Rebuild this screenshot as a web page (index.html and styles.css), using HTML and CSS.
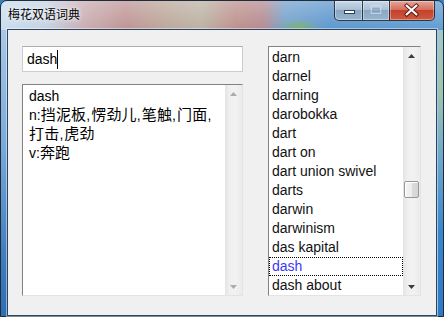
FILE: index.html
```html
<!DOCTYPE html>
<html>
<head>
<meta charset="utf-8">
<link rel="stylesheet" href="styles.css">
</head>
<body>
<div class="window">
  <div class="titlebar">
    <span class="title">梅花双语词典</span>
    <div class="caption-buttons">
      <div class="cbtn min"><svg width="26" height="19" viewBox="0 0 26 19"><rect x="8.5" y="9.5" width="10" height="3" fill="#fff" stroke="#2f3e50"/></svg></div>
      <div class="cbtn max"><svg width="27" height="19" viewBox="0 0 27 19"><rect x="8.5" y="4.5" width="10" height="8" fill="none" stroke="#d9e5f0" stroke-opacity="0.8"/><rect x="10.5" y="7.5" width="6" height="3" fill="none" stroke="#8aa5c0"/></svg></div>
      <div class="cbtn close"><svg width="46" height="19" viewBox="0 0 46 19"><path d="M17.5 4.5 L27.5 13.5 M27.5 4.5 L17.5 13.5" stroke="#5a1d14" stroke-width="4.2" stroke-linecap="square"/><path d="M17.5 4.5 L27.5 13.5 M27.5 4.5 L17.5 13.5" stroke="#fff" stroke-width="2.2" stroke-linecap="square"/></svg></div>
    </div>
  </div>
  <div class="client">
    <div class="left-col">
      <div class="edit"><span class="edit-text">dash</span><span class="caret"></span></div>
      <div class="memo">
        <div class="memo-text">dash<br>n:<span class="zh">挡泥板</span><span class="cm">,</span><span class="zh">愣劲儿</span><span class="cm">,</span><span class="zh">笔触</span><span class="cm">,</span><span class="zh">门面</span><span class="cm">,</span><br><span class="zh">打击</span><span class="cm">,</span><span class="zh">虎劲</span><br>v:<span class="zh">奔跑</span></div>
        <div class="vscroll disabled">
          <div class="sarrow"><svg width="7" height="4" viewBox="0 0 7 4"><path d="M3.5 0 L7 4 L0 4Z"/></svg></div>
          <div class="strack"></div>
          <div class="sarrow"><svg width="7" height="4" viewBox="0 0 7 4"><path d="M0 0 L7 0 L3.5 4Z"/></svg></div>
        </div>
      </div>
    </div>
    <div class="listbox">
      <ul class="items">
        <li>darn</li>
        <li>darnel</li>
        <li>darning</li>
        <li>darobokka</li>
        <li>dart</li>
        <li>dart on</li>
        <li>dart union swivel</li>
        <li>darts</li>
        <li>darwin</li>
        <li>darwinism</li>
        <li>das kapital</li>
        <li class="selected">dash</li>
        <li>dash about</li>
      </ul>
      <div class="vscroll">
        <div class="sarrow"><svg width="7" height="4" viewBox="0 0 7 4"><path d="M3.5 0 L7 4 L0 4Z"/></svg></div>
        <div class="strack"><div class="thumb"></div></div>
        <div class="sarrow"><svg width="7" height="4" viewBox="0 0 7 4"><path d="M0 0 L7 0 L3.5 4Z"/></svg></div>
      </div>
    </div>
  </div>
</div>
</body>
</html>
```
FILE: styles.css
```css
* { box-sizing: border-box; }
html, body { margin: 0; padding: 0; }
body { width: 444px; height: 317px; overflow: hidden; background: #3f7fc0; }

.window {
  width: 444px;
  height: 317px;
  border: 1px solid #1e2c3c;
  border-radius: 7px 7px 0 0;
  padding: 0 6px 6px 6px;
  display: flex;
  flex-direction: column;
  background-origin: border-box;
  background:
    linear-gradient(180deg, rgba(255,255,255,.30) 0, rgba(255,255,255,.06) 28px, rgba(255,255,255,0) 29px),
    radial-gradient(ellipse 22px 9px at 298px 26px, rgba(120,175,80,.75), rgba(120,175,80,0)),
    linear-gradient(180deg, #a9c8e6, #7aaad9 40%, #3f7bbd 80%, #2f6cb2) 0 29px / 7px 288px no-repeat,
    linear-gradient(180deg, #a5c8c8, #9cc4ae 22%, #6ea6cc 45%, #3a86cc 70%, #2f78c4) 437px 29px / 7px 288px no-repeat,
    linear-gradient(90deg, #2f6cb2, #3a7cc0 115px, #7eae9c 190px, #a8c69d 290px, #a2c49a 372px, #3d87cc 392px, #2f7cc6) 0 310px / 100% 7px no-repeat,
    linear-gradient(90deg, #c6dcef 0, #c2cfdf 45px, #c6a7ac 85px, #bb8f8e 125px, #b8a496 168px, #b8ae9f 200px, #ba8a86 235px, #b0848a 262px, #6d9dcb 285px, #5592cb 330px, #5b98cf 444px);
}

.titlebar {
  height: 28px;
  flex: none;
  display: flex;
  justify-content: space-between;
  align-items: flex-start;
}
.title {
  font-family: "Noto Sans CJK SC", sans-serif;
  font-size: 12px;
  line-height: 16px;
  padding: 5px 0 0 1px;
  color: #000;
  text-shadow: 0 0 6px rgba(255,255,255,.9), 0 0 3px rgba(255,255,255,.8);
}
.caption-buttons {
  display: flex;
  margin-right: 2px;
}
.cbtn {
  height: 20px;
  border: 1px solid rgba(28,42,60,.9);
  border-top: none;
  display: flex;
  align-items: flex-start;
  justify-content: center;
  box-shadow: inset 0 0 0 1px rgba(255,255,255,.35);
}
.cbtn svg { display: block; }
.min {
  width: 28px;
  border-right: none;
  border-bottom-left-radius: 5px;
  background: linear-gradient(180deg, #c9d9e8 0, #aac0d6 45%, #8aa6c2 50%, #9ab4cd 100%);
}
.max {
  width: 27px;
  border-right: none;
  background: linear-gradient(180deg, #c9d9e8 0, #aac0d6 45%, #8aa6c2 50%, #9ab4cd 100%);
}
.close {
  width: 46px;
  border-bottom-right-radius: 5px;
  background: linear-gradient(180deg, #e6a597 0, #d66f5e 45%, #c4412c 50%, #cf5a40 100%);
}

.client {
  flex: 1;
  background: #f0f0f0;
  border: 1px solid #2a4563;
  box-shadow: 0 0 0 1px rgba(255,255,255,.45);
  padding: 16px 15px 19px 14px;
  display: flex;
  gap: 25px;
}

.left-col {
  width: 221px;
  display: flex;
  flex-direction: column;
  gap: 12px;
}
.edit {
  height: 26px;
  background: #fff;
  border: 1px solid #c9cdd3;
  border-top-color: #abadb3;
  padding-left: 4px;
  display: flex;
  align-items: center;
  font-family: "Liberation Sans", "Noto Sans CJK SC", sans-serif;
  font-size: 14px;
  line-height: 24px;
  color: #000;
}
.caret {
  width: 1px;
  height: 19px;
  background: #000;
  margin-left: 0;
}

.memo {
  flex: 1;
  background: #fff;
  border: 1px solid #e3e3e3;
  border-top-color: #828282;
  border-left-color: #828282;
  display: flex;
}
.memo-text {
  flex: 1;
  padding: 2px 0 0 6px;
  font-family: "Liberation Sans", "Noto Sans CJK SC", sans-serif;
  font-size: 14px;
  line-height: 19px;
  color: #000;
}
.memo-text .zh {
  font-family: "Noto Sans CJK SC", sans-serif;
  font-size: 15px;
  line-height: 1;
  letter-spacing: 0.2px;
}
.memo-text .cm {
  margin-right: 1px;
}

.vscroll {
  width: 17px;
  flex: none;
  display: flex;
  flex-direction: column;
  background: linear-gradient(90deg, #e4e4e4, #efefef 25%, #f2f2f2 60%, #ebebeb);
}
.sarrow {
  height: 17px;
  display: flex;
  align-items: center;
  justify-content: center;
}
.sarrow svg { display: block; fill: #3c3c3c; }
.vscroll.disabled .sarrow svg { fill: #ababab; }
.strack { flex: 1; }
.thumb {
  margin: 117px 0 0 1px;
  width: 15px;
  height: 17px;
  border: 1px solid #979797;
  border-radius: 2px;
  background: linear-gradient(90deg, #f6f6f6, #ececec 50%, #dcdcdc 51%, #d4d4d4);
  box-shadow: inset 1px 1px 0 #fff;
}

.listbox {
  width: 153px;
  background: #fff;
  border: 1px solid #e3e3e3;
  border-top-color: #828282;
  border-left-color: #828282;
  display: flex;
}
.items {
  flex: 1;
  list-style: none;
  margin: 0;
  padding: 1px 0 0 0;
  overflow: hidden;
  font-family: "Liberation Sans", "Noto Sans CJK SC", sans-serif;
  font-size: 14px;
  line-height: 19px;
  color: #111;
}
.items li {
  height: 19px;
  padding-left: 3px;
  white-space: nowrap;
}
.items li.selected {
  color: #3a3af5;
  border: 1px dotted #000;
  padding-left: 2px;
  line-height: 17px;
}
```
